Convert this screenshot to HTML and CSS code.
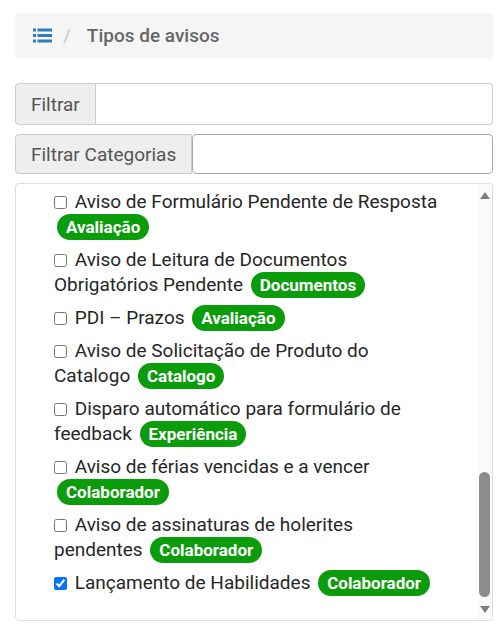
FILE: index.html
```html
<!DOCTYPE html>
<html lang="pt-BR">
<head>
<meta charset="utf-8">
<title>Tipos de avisos</title>
<link rel="stylesheet" href="styles.css">
</head>
<body>
<div class="page">
  <nav class="breadcrumb">
    <svg class="bc-icon" width="19" height="15" viewBox="0 0 19 15" aria-hidden="true">
      <rect x="0" y="0.5" width="3" height="3" fill="#2f7bc4"/>
      <rect x="4.5" y="0.5" width="14.5" height="3" fill="#2f7bc4"/>
      <rect x="0" y="6" width="3" height="3" fill="#2f7bc4"/>
      <rect x="4.5" y="6" width="14.5" height="3" fill="#2f7bc4"/>
      <rect x="0" y="11.5" width="3" height="3" fill="#2f7bc4"/>
      <rect x="4.5" y="11.5" width="14.5" height="3" fill="#2f7bc4"/>
    </svg>
    <span class="bc-sep">/</span>
    <span class="bc-current">Tipos de avisos</span>
  </nav>

  <div class="input-group first">
    <span class="addon">Filtrar</span>
    <input class="field" type="text">
  </div>

  <div class="input-group second">
    <span class="addon">Filtrar Categorias</span>
    <input class="field" type="text">
  </div>

  <div class="list-box">
    <ul class="list">
      <li><input type="checkbox"> Aviso de Formulário Pendente de Resposta <span class="badge">Avaliação</span></li>
      <li><input type="checkbox"> Aviso de Leitura de Documentos Obrigatórios Pendente <span class="badge">Documentos</span></li>
      <li><input type="checkbox"> PDI – Prazos <span class="badge">Avaliação</span></li>
      <li><input type="checkbox"> Aviso de Solicitação de Produto do Catalogo <span class="badge">Catalogo</span></li>
      <li><input type="checkbox"> Disparo automático para formulário de feedback <span class="badge">Experiência</span></li>
      <li><input type="checkbox"> Aviso de férias vencidas e a vencer <span class="badge">Colaborador</span></li>
      <li><input type="checkbox"> Aviso de assinaturas de holerites pendentes <span class="badge">Colaborador</span></li>
      <li><input type="checkbox" checked> Lançamento de Habilidades <span class="badge">Colaborador</span></li>
    </ul>
    <div class="scrollbar" aria-hidden="true">
      <div class="sb-btn"><span class="arrow-up"></span></div>
      <div class="sb-track"><div class="sb-thumb"></div></div>
      <div class="sb-btn"><span class="arrow-down"></span></div>
    </div>
  </div>
</div>
</body>
</html>
```

FILE: styles.css
```css
html, body {
  margin: 0;
  padding: 0;
  background: #ffffff;
}

body {
  font-family: Roboto, "Liberation Sans", Arial, sans-serif;
  color: #333333;
}

.page {
  padding: 13px 11px 0 15px;
}

.breadcrumb {
  height: 45px;
  background: #f5f5f5;
  border-radius: 4px;
  display: flex;
  align-items: center;
  padding: 0 18px;
  margin-bottom: 25px;
}

.bc-icon {
  display: block;
  flex: none;
}

.bc-sep {
  color: #c8c8c8;
  font-size: 19px;
  margin: 0 16px 0 11px;
}

.bc-current {
  color: #666666;
  font-size: 19px;
  font-weight: 500;
}

.input-group {
  display: flex;
  margin-bottom: 9px;
}

.input-group.first {
  height: 42px;
}

.input-group.second {
  height: 40px;
}

.addon {
  display: flex;
  align-items: center;
  padding: 0 15px;
  background: #eeeeee;
  border: 1px solid #cccccc;
  border-radius: 4px 0 0 4px;
  font-size: 19px;
  color: #555555;
  box-sizing: border-box;
}

.field {
  flex: 1;
  min-width: 0;
  margin: 0;
  padding: 0 12px;
  border: 1px solid #cccccc;
  border-left: none;
  border-radius: 0 4px 4px 0;
  background: #ffffff;
  box-sizing: border-box;
  font-family: inherit;
  font-size: 16px;
  outline: none;
}

.second .field {
  border: 1px solid #a9a9a9;
  border-radius: 4px;
}

.list-box {
  height: 438px;
  box-sizing: border-box;
  border: 1px solid #dddddd;
  border-radius: 4px;
  overflow: hidden;
  display: flex;
}

.list {
  flex: 1;
  min-width: 0;
  list-style: none;
  margin: 0;
  padding: 4.5px 38px 0 38px;
  font-size: 19px;
  line-height: 25px;
  color: #262626;
}

.list li {
  margin-bottom: 7px;
}

.list input[type="checkbox"] {
  width: 13px;
  height: 13px;
  margin: 0 3px 0 0;
  vertical-align: -1px;
}

.badge {
  display: inline-block;
  background: #0a9c0a;
  color: #ffffff;
  font-weight: 700;
  font-size: 17px;
  line-height: 26px;
  padding: 0 9px;
  border-radius: 13px;
  margin-left: 3px;
}

.scrollbar {
  flex: none;
  width: 15px;
  display: flex;
  flex-direction: column;
  background: #fafafa;
}

.sb-btn {
  height: 22px;
  display: flex;
  align-items: center;
  justify-content: center;
}

.arrow-up,
.arrow-down {
  width: 0;
  height: 0;
  border-left: 5px solid transparent;
  border-right: 5px solid transparent;
}

.arrow-up {
  border-bottom: 7px solid #7d7d7d;
}

.arrow-down {
  border-top: 7px solid #7d7d7d;
}

.sb-track {
  flex: 1;
  display: flex;
  flex-direction: column;
  justify-content: flex-end;
  align-items: center;
  padding-bottom: 1px;
}

.sb-thumb {
  width: 11px;
  height: 125px;
  border-radius: 6px;
  background: #8c8c8c;
}
```
